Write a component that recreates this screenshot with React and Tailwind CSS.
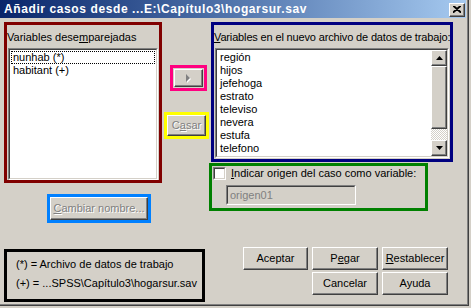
import React from "react";

const raised =
  "border border-t-white border-l-white border-r-[#404040] border-b-[#404040] shadow-[inset_-1px_-1px_#808080]";
const disabledText = "text-[#808080] [text-shadow:1px_1px_#ffffff]";

const Sunken = ({ className = "", innerClass = "bg-white", children }) => (
  <div className={`border border-t-[#808080] border-l-[#808080] border-r-white border-b-white ${className}`}>
    <div className={`h-full border border-t-[#404040] border-l-[#404040] border-r-[#d4d0c8] border-b-[#d4d0c8] ${innerClass}`}>
      {children}
    </div>
  </div>
);

const Button = ({ children, className = "", disabled }) => (
  <div className={`${raised} bg-[#d4d0c8] flex items-center justify-center ${disabled ? disabledText : ""} ${className}`}>
    {children}
  </div>
);

const Arrow = ({ down }) => (
  <svg width="7" height="4" viewBox="0 0 7 4">
    <polygon points={down ? "0,0 7,0 3.5,4" : "0,4 7,4 3.5,0"} fill="#000" />
  </svg>
);

const ScrollBtn = ({ down }) => (
  <div className={`${raised} bg-[#d4d0c8] h-[16px] flex items-center justify-center`}>
    <Arrow down={down} />
  </div>
);

const leftItems = ["nunhab (*)", "habitant (+)"];
const rightItems = ["región", "hijos", "jefehoga", "estrato", "televiso", "nevera", "estufa", "telefono"];

export default function App() {
  return (
    <div className="w-[471px] h-[308px] bg-[#d4d0c8] font-['Liberation_Sans',Arial,sans-serif] text-[11px] text-black overflow-hidden">
      <div className="w-[469px] h-[306px] border-r border-b border-r-[#404040] border-b-[#404040] shadow-[inset_-1px_-1px_#808080]">
        {/* title bar */}
        <div className="h-[18px] mr-[2px] flex items-center justify-between bg-gradient-to-r from-[#0a246a] to-[#a6caf0] pl-[4px] pr-[1px]">
          <span className="text-white font-bold text-[12px] tracking-[0.6px] leading-[18px] whitespace-nowrap">
            Añadir casos desde ...E:\Capítulo3\hogarsur.sav
          </span>
          <Button className="w-[16px] h-[14px] mt-[1px] pb-[1px]">
            <svg width="8" height="7" viewBox="0 0 8 7">
              <path d="M0 0 L8 7 M8 0 L0 7 M1 0 L8 6 M7 0 L0 6" stroke="#000" strokeWidth="1.3" />
            </svg>
          </Button>
        </div>

        <div className="flex pl-[4px] pt-[4px]">
          {/* left column */}
          <div className="w-[158px] flex flex-col">
            <div className="h-[161px] border-[3px] border-[#800000] flex flex-col">
              <div className="h-[23px] pt-[6px] leading-[13px] whitespace-nowrap">
                Variables dese<span className="underline">m</span>parejadas
              </div>
              <Sunken className="flex-1 mx-[1px]">
                <div className="pt-[1px] px-[1px]">
                  {leftItems.map((t, i) => (
                    <div
                      key={t}
                      className={`h-[13px] leading-[13px] px-[2px] ${i === 0 ? "outline-1 outline-dotted outline-black -outline-offset-1" : ""}`}
                    >
                      {t}
                    </div>
                  ))}
                </div>
              </Sunken>
            </div>
            <div className="mt-[11px] ml-[43px] w-[104px] h-[29px] border-[3px] border-[#0080ff] flex">
              <Button disabled className="flex-1">
                <span>
                  <span className="underline">C</span>ambiar nombre...
                </span>
              </Button>
            </div>
          </div>

          {/* middle column */}
          <div className="w-[47px] flex flex-col">
            <div className="mt-[43px] ml-[8px] w-[37px] h-[26px] border-[3px] border-[#ff0080] flex p-[1px]">
              <Button className="flex-1">
                <svg width="6" height="9" viewBox="0 0 6 9">
                  <polygon points="1,1 5,5 1,9" fill="#fff" />
                  <polygon points="0,0 4,4 0,8" fill="#808080" />
                </svg>
              </Button>
            </div>
            <div className="mt-[21px] ml-[2px] w-[45px] h-[27px] border-[3px] border-[#ffff00] flex">
              <Button disabled className="flex-1">
                <span>
                  C<span className="underline">a</span>sar
                </span>
              </Button>
            </div>
          </div>

          {/* right column */}
          <div className="flex flex-col">
            <div className="ml-[2px] w-[242px] h-[140px] border-[3px] border-[#000080] flex flex-col">
              <div className="h-[23px] pt-[6px] leading-[13px] tracking-[-0.15px] whitespace-nowrap">
                <span className="underline">V</span>ariables en el nuevo archivo de datos de trabajo:
              </div>
              <Sunken className="h-[110px] mx-[1px]" innerClass="bg-white flex">
                <div className="flex-1 pt-[1px] px-[1px]">
                  {rightItems.map((t) => (
                    <div key={t} className="h-[13px] leading-[13px] px-[2px]">
                      {t}
                    </div>
                  ))}
                </div>
                <div className="w-[16px] flex flex-col">
                  <ScrollBtn />
                  <div className={`${raised} bg-[#d4d0c8] h-[63px]`} />
                  <div className="flex-1 bg-[repeating-conic-gradient(#ffffff_0_25%,#d4d0c8_0_50%)] bg-[length:2px_2px]" />
                  <ScrollBtn down />
                </div>
              </Sunken>
            </div>
            <div className="mt-[1px] w-[219px] h-[48px] border-[3px] border-[#008000] flex flex-col">
              <div className="flex items-center pt-[1px] pl-[1px]">
                <Sunken className="w-[13px] h-[13px]" />
                <span className="ml-[5px] leading-[13px]">
                  <span className="underline">I</span>ndicar origen del caso como variable:
                </span>
              </div>
              <Sunken className="mt-[5px] ml-[14px] w-[130px] h-[20px]" innerClass="bg-[#d4d0c8] text-[#808080] pl-[2px] leading-[16px]">
                origen01
              </Sunken>
            </div>
          </div>
        </div>

        {/* bottom row */}
        <div className="flex pl-[4px] mt-[26px]">
          <div className="w-[201px] h-[53px] border-[3px] border-black pl-[9px] pt-[3px] leading-[19px] whitespace-nowrap">
            <div>(*) = Archivo de datos de trabajo</div>
            <div>(+) = ...SPSS\Capítulo3\hogarsur.sav</div>
          </div>
          <div className="ml-[38px] -mt-[2px] grid grid-cols-[65px_66px_66px] gap-x-[4px] gap-y-[2px] h-fit">
            <Button className="h-[23px]">Aceptar</Button>
            <Button className="h-[23px]">
              <span>
                P<span className="underline">e</span>gar
              </span>
            </Button>
            <Button className="h-[23px]">
              <span>
                <span className="underline">R</span>establecer
              </span>
            </Button>
            <div />
            <Button className="h-[23px]">Cancelar</Button>
            <Button className="h-[23px]">Ayuda</Button>
          </div>
        </div>
      </div>
    </div>
  );
}
